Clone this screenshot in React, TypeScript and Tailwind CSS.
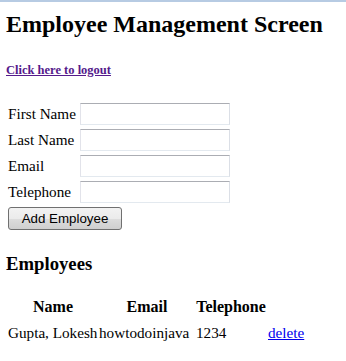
import React from "react";

function Field({ label }: { label: string }) {
  return (
    <>
      <label className="leading-[20px] text-[15.2px] pt-[1px]">{label}</label>
      <input
        type="text"
        className="w-[150px] h-[22px] border border-t-[#abadb3] border-l-[#e2e3ea] border-r-[#dbdfe6] border-b-[#e3e9ef] bg-white outline-none"
      />
    </>
  );
}

export default function App() {
  return (
    <div className="min-h-[361px] bg-white border-t-2 border-[#b7cbe3] font-['Liberation_Serif',serif] text-black">
      <div className="pl-[6px] pt-[8px]">
        <h1 className="text-[24px] leading-[28px] font-bold">Employee Management Screen</h1>
        <a
          href="#"
          className="block mt-[25px] text-[12.5px] leading-[14px] font-bold text-[#551a8b] underline w-max"
        >
          Click here to logout
        </a>
        <div className="mt-[26px] ml-[2px] grid grid-cols-[72px_150px] gap-y-[4px] items-start">
          <Field label="First Name" />
          <Field label="Last Name" />
          <Field label="Email" />
          <Field label="Telephone" />
        </div>
        <button className="mt-[4px] ml-[2px] w-[114px] h-[23px] rounded-[3px] border border-[#707070] bg-[linear-gradient(#f2f2f2_0%,#ebebeb_50%,#dddddd_50%,#cfcfcf_100%)] font-['Liberation_Sans',sans-serif] text-[13.33px] leading-[16px] text-black">
          Add Employee
        </button>
        <h3 className="mt-[23px] text-[18.72px] leading-[22px] font-bold">Employees</h3>
        <div className="mt-[22px] ml-[1px] grid grid-cols-[92px_96px_72px_auto] gap-y-[6px] leading-[20px]">
          <div className="font-bold text-center text-[16px]">Name</div>
          <div className="font-bold text-center text-[16px]">Email</div>
          <div className="font-bold text-center text-[16px]">Telephone</div>
          <div></div>
          <div className="pl-[1px] whitespace-nowrap text-[15.2px]">Gupta, Lokesh</div>
          <div className="whitespace-nowrap text-[15.2px]">howtodoinjava</div>
          <div className="pl-[1px] text-[15.2px]">1234</div>
          <div className="pl-[1px] text-[15.2px]">
            <a href="#" className="text-[#0000ee] underline">
              delete
            </a>
          </div>
        </div>
      </div>
    </div>
  );
}
